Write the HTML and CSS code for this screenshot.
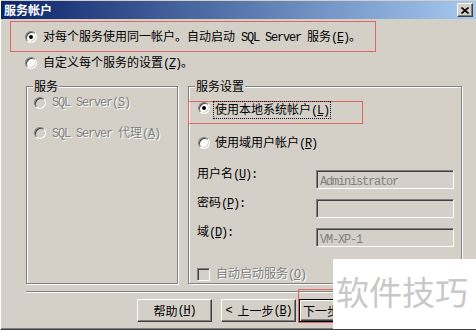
FILE: index.html
```html
<!DOCTYPE html>
<html lang="zh-CN">
<head>
    <meta charset="UTF-8">
    <title>服务帐户</title>
    <link rel="stylesheet" href="styles.css">
</head>
<body>
    <div class="dialog">
        <div class="titlebar">
            <span class="title">服务帐户</span>
            <span class="close-button">
                <svg width="8" height="7" viewBox="0 0 8 7"><path d="M0.5 0.5l7 6M7.5 0.5l-7 6" stroke="#000" stroke-width="1.6" fill="none"/></svg>
            </span>
        </div>

        <div class="mark-row">
            <span class="radio checked"></span>
            <span>对每个服务使用同一帐户。自动启动<span class="en"> SQL Server </span>服务<span class="en">(<u>E</u>)</span>。</span>
        </div>
        <div class="option-row">
            <span class="radio"></span>
            <span>自定义每个服务的设置<span class="en">(<u>Z</u>)</span>。</span>
        </div>

        <div class="groups">
            <div class="group group-left">
                <span class="legend">服务</span>
                <div class="group-row disabled">
                    <span class="radio"></span>
                    <span class="en">SQL Server(<u>S</u>)</span>
                </div>
                <div class="group-row disabled second">
                    <span class="radio"></span>
                    <span><span class="en">SQL Server </span>代理<span class="en">(<u>A</u>)</span></span>
                </div>
            </div>

            <div class="group group-right">
                <span class="legend">服务设置</span>
                <div class="mark-row small">
                    <span class="radio checked"></span>
                    <span class="focus-label">使用本地系统帐户<span class="en">(<u>L</u>)</span></span>
                </div>
                <div class="group-row domain">
                    <span class="radio"></span>
                    <span>使用域用户帐户<span class="en">(<u>R</u>)</span></span>
                </div>

                <div class="field-row first">
                    <span class="field-label">用户名<span class="en">(<u>U</u>):</span></span>
                    <span class="field"><span class="en">Administrator</span></span>
                </div>
                <div class="field-row">
                    <span class="field-label">密码<span class="en">(<u>P</u>):</span></span>
                    <span class="field"></span>
                </div>
                <div class="field-row">
                    <span class="field-label">域<span class="en">(<u>D</u>):</span></span>
                    <span class="field"><span class="en">VM-XP-1</span></span>
                </div>

                <div class="group-row check-row disabled">
                    <span class="checkbox"></span>
                    <span>自动启动服务<span class="en">(<u>O</u>)</span></span>
                </div>
            </div>
        </div>

        <div class="separator"></div>

        <div class="buttons">
            <span class="button help-button">帮助<span class="en">(<u>H</u>)</span></span>
            <span class="button"><span class="en back-arrow">&lt;</span>上一步<span class="en">(<u>B</u>)</span></span>
            <span class="button-wrap">
                <span class="button default-button">下一步</span>
                <span class="annotation"></span>
            </span>
        </div>

        <div class="watermark">软件技巧</div>
    </div>
</body>
</html>
```

FILE: styles.css
```css
body {
    margin: 0;
    font-family: "Noto Sans CJK SC", sans-serif;
    font-size: 12px;
    line-height: 14px;
    color: #000;
}
.dialog {
    position: relative;
    width: 476px;
    height: 330px;
    box-sizing: border-box;
    background-color: #d4d0c8;
    border-left: 1px solid #fff;
    border-bottom: 1px solid #404040;
    box-shadow: inset 0 -1px #808080;
    overflow: hidden;
}
.en {
    font-family: "Liberation Mono", monospace;
    letter-spacing: -1.2px;
}
u {
    text-decoration: underline;
}

/* barra de titulo */
.titlebar {
    display: flex;
    justify-content: space-between;
    align-items: center;
    height: 18px;
    margin-top: 1px;
    padding: 0 3px;
    background: linear-gradient(to right, #0a246a, #a6caf0);
}
.title {
    color: #fff;
    font-weight: bold;
}
.close-button {
    display: flex;
    justify-content: center;
    align-items: center;
    width: 16px;
    height: 14px;
    box-sizing: border-box;
    background-color: #d4d0c8;
    border: 1px solid;
    border-color: #fff #404040 #404040 #fff;
    box-shadow: inset -1px -1px #808080;
}

/* opciones de arriba */
.mark-row {
    display: flex;
    align-items: center;
    gap: 6px;
    width: 366px;
    height: 31px;
    box-sizing: border-box;
    margin: 2px 0 0 9px;
    padding-left: 14px;
    border: 1px solid #e06666;
}
.option-row {
    display: flex;
    align-items: center;
    gap: 6px;
    height: 21px;
    padding-left: 24px;
}

/* radios y checkbox estilo clasico */
.radio {
    position: relative;
    flex: none;
    width: 12px;
    height: 12px;
    box-sizing: border-box;
    border-radius: 50%;
    background-color: #fff;
    border: 1px solid;
    border-color: #808080 #fff #fff #808080;
    box-shadow: inset 1px 1px #404040, inset -1px -1px #d4d0c8;
}
.radio.checked::after {
    content: "";
    position: absolute;
    left: 3px;
    top: 3px;
    width: 4px;
    height: 4px;
    border-radius: 50%;
    background-color: #000;
}
.checkbox {
    flex: none;
    width: 13px;
    height: 13px;
    box-sizing: border-box;
    border: 1px solid;
    border-color: #808080 #fff #fff #808080;
    box-shadow: inset 1px 1px #404040, inset -1px -1px #d4d0c8;
}
.disabled {
    color: #808080;
    text-shadow: 1px 1px #fff;
}
.disabled .radio {
    background-color: #d4d0c8;
}

/* grupos */
.groups {
    display: flex;
    gap: 10px;
    margin: 13px 0 0 25px;
}
.group {
    position: relative;
    height: 198px;
    box-sizing: border-box;
    border: 1px solid #808080;
    box-shadow: inset 1px 1px #fff, 1px 1px #fff;
}
.group-left {
    width: 152px;
    padding: 9px 0 0 7px;
}
.group-right {
    width: 274px;
    padding-top: 14px;
}
.legend {
    position: absolute;
    top: -8px;
    left: 6px;
    padding: 0 1px;
    background-color: #d4d0c8;
}
.group-row {
    display: flex;
    align-items: center;
    gap: 6px;
}
.group-row.second {
    margin-top: 15px;
}
.mark-row.small {
    align-items: flex-start;
    gap: 4px;
    width: 175px;
    height: 23px;
    margin: 0 0 0 -1px;
    padding: 0 0 0 9px;
}
.focus-label {
    padding: 0 1px;
    outline: 1px dotted #000;
}
.group-row.domain {
    gap: 5px;
    margin-top: 11px;
    padding-left: 9px;
}
.field-row {
    display: flex;
    margin-top: 6px;
    padding-left: 8px;
}
.field-row.first {
    margin-top: 15px;
}
.field-label {
    width: 119px;
}
.field {
    width: 138px;
    height: 19px;
    box-sizing: border-box;
    margin-top: 4px;
    padding-left: 3px;
    line-height: 17px;
    color: #808080;
    border: 1px solid;
    border-color: #808080 #fff #fff #808080;
    box-shadow: inset 1px 1px #404040, inset -1px -1px #d4d0c8;
}
.check-row {
    margin-top: 19px;
    padding-left: 8px;
}

.separator {
    margin: 7px 0 0 25px;
    border-top: 1px solid #808080;
    border-bottom: 1px solid #fff;
}

/* botones */
.buttons {
    display: flex;
    margin: 6px 0 0 136px;
}
.button {
    display: flex;
    justify-content: center;
    align-items: center;
    flex: none;
    width: 75px;
    height: 23px;
    box-sizing: border-box;
    border: 1px solid;
    border-color: #fff #404040 #404040 #fff;
    box-shadow: inset -1px -1px #808080;
}
.help-button {
    margin-right: 9px;
}
.back-arrow {
    margin-right: 6px;
}
.button-wrap {
    position: relative;
    margin-left: 3px;
}
.default-button {
    justify-content: flex-start;
    padding-left: 3px;
    border-color: #000;
    box-shadow: inset 1px 1px #fff, inset -1px -1px #404040, inset -2px -2px #808080;
}
.annotation {
    position: absolute;
    top: -10px;
    left: -1px;
    width: 80px;
    height: 34px;
    box-sizing: border-box;
    border: 1px solid #e06666;
}

.watermark {
    position: absolute;
    right: 0;
    bottom: -1px;
    width: 143px;
    height: 71px;
    box-sizing: border-box;
    padding: 15px 0 0 3px;
    background-color: #fff;
    color: #c8c8c8;
    font-size: 33px;
    line-height: 34px;
}
```
